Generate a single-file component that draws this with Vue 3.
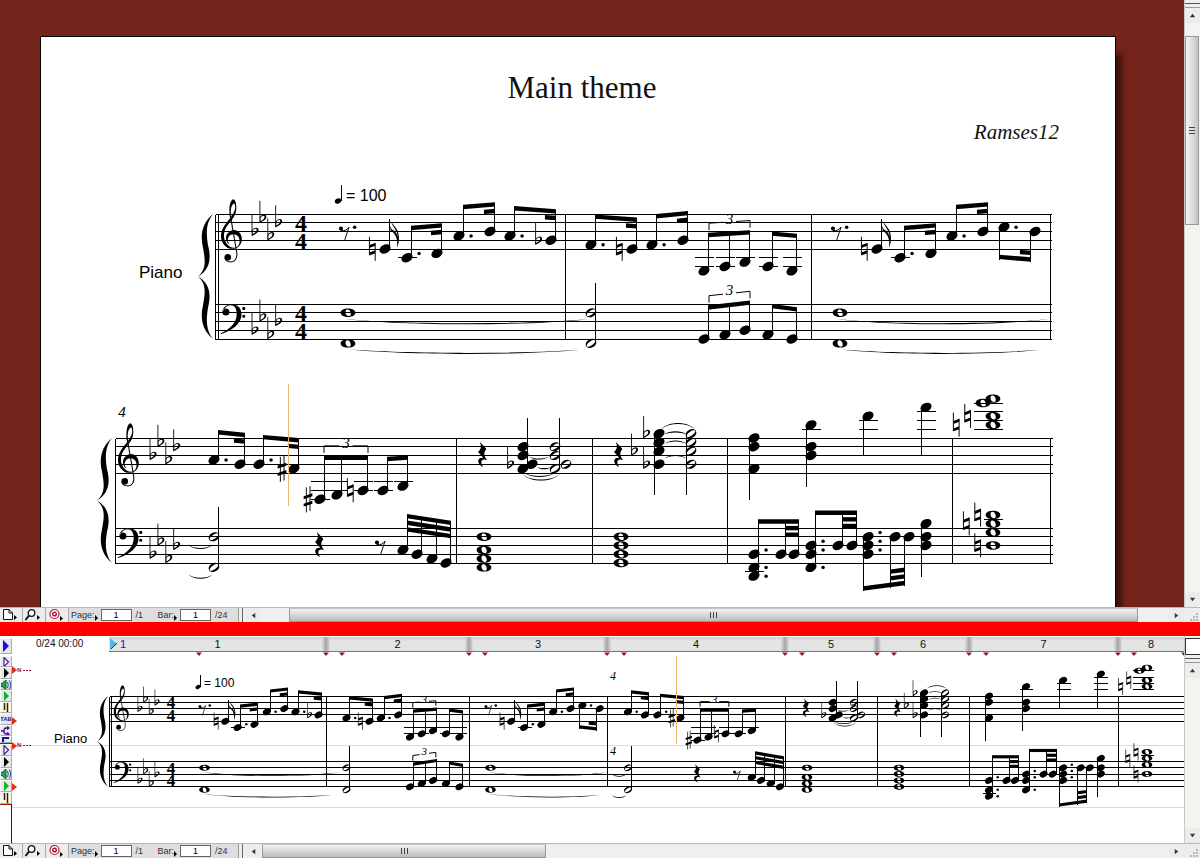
<template>
  <div class="score-app">
    <section v-for="pane in panes" :key="pane.id" :class="['pane', 'pane-' + pane.id]">
      <div class="pane-body">
        <!-- page view -->
        <div v-if="pane.id === 'page'" class="desk">
          <article class="sheet">
            <header class="sheet-head">
              <h1>Main theme</h1>
              <p class="composer">Ramses12</p>
            </header>
            <svg class="sheet-music" viewBox="41 144 1074 464">
              <path v-for="(m, i) in pageMarks.lines" :key="'l' + i" class="ink-line" :class="{ crisp: m.crisp }" :d="m.d" :transform="m.t" :stroke-width="m.w" />
              <path v-for="(m, i) in pageMarks.fills" :key="'f' + i" fill-rule="evenodd" :d="m.d" :transform="m.t" />
              <text v-for="(m, i) in pageMarks.texts" :key="'t' + i" :class="m.cls" :x="m.x" :y="m.y" :font-size="m.size">{{ m.text }}</text>
              <text class="sans" x="139" y="278" font-size="17">Piano</text>
              <text class="sans" x="346" y="201" font-size="16">= 100</text>
              <text class="number" x="122" y="417" font-size="15">4</text>
              <path class="cursor-line" d="M288.5 384V506" />
            </svg>
          </article>
        </div>

        <!-- scroll view -->
        <template v-else>
          <div class="track-tools">
            <button class="tool tool-top" aria-label="Play"><svg viewBox="0 0 12 12"><path d="M3 0L9 6L3 12Z" fill="#1010e0" /></svg></button>
            <div v-for="(group, g) in trackTools" :key="g" :class="['tool-group', 'group-' + g]">
              <button v-for="(tool, i) in group" :key="i" :class="['tool', { half: tool === 'cut' }]" :aria-label="tool">
                <svg v-if="tool !== 'tab'" viewBox="0 0 12 12">
                  <path v-if="tool === 'voice'" d="M4 1.500L8.500 6L4 10.500Z" fill="#fff" stroke="#4a1a90" stroke-width="1.200" />
                  <path v-else-if="tool === 'solo'" d="M4 1L9 6L4 11Z" />
                  <path v-else-if="tool === 'start'" d="M4 1L9 6L4 11Z" fill="#10b030" />
                  <g v-else-if="tool === 'sound'">
                    <path d="M0 4.500H2L6 1V11L2 7.500H0Z" fill="#20a060" stroke="#063" />
                    <path d="M7.500 3Q9 6 7.500 9M9.500 1.500Q12 6 9.500 10.500" fill="none" stroke="#1848a0" />
                  </g>
                  <g v-else-if="tool === 'keys'">
                    <path d="M1 1H11V11H1Z" fill="#fffbd8" />
                    <path d="M4.500 1V8M7.500 1V11" stroke="#222" stroke-width="1.500" />
                  </g>
                  <path v-else-if="tool === 'route'" d="M1 6H4M8 3H6Q4 3 4 6T6 9H8M7 1.500L9 3L7 4.500M7 7.500L9 9L7 10.500" fill="none" stroke="#5010a0" stroke-width="1.300" />
                  <path v-else d="M3 9V4H9" fill="none" stroke="#1010a0" stroke-width="2" />
                </svg>
                <span v-else>TAB</span>
              </button>
            </div>
            <div class="tool-rest"></div>
          </div>
          <div class="roll">
            <div class="ruler-row">
              <span class="clock">0/24 00:00</span>
              <div class="ruler">
                <span class="ruler-start"><svg viewBox="0 0 8 12"><path d="M0 0L7 6L0 12Z" fill="#55b8e8" /><path d="M1 11L7 5" stroke="#333" /></svg>1</span>
                <span v-for="(w, i) in barWidths" :key="i" class="bar-cell" :style="{ flexGrow: w }">{{ i + 1 }}</span>
              </div>
            </div>
            <svg class="roll-music" viewBox="12 652 1172 191" preserveAspectRatio="xMinYMin slice">
              <path class="track-line" d="M12 745.500H1184M12 807.500H1184" />
              <path v-for="(m, i) in rollMarks.lines" :key="'l' + i" class="ink-line" :class="{ crisp: m.crisp }" :d="m.d" :transform="m.t" :stroke-width="m.w" />
              <path v-for="(m, i) in rollMarks.fills" :key="'f' + i" fill-rule="evenodd" :d="m.d" :transform="m.t" />
              <text v-for="(m, i) in rollMarks.texts" :key="'t' + i" :class="m.cls" :x="m.x" :y="m.y" :font-size="m.size">{{ m.text }}</text>
              <text class="sans" x="54" y="743" font-size="13">Piano</text>
              <text class="sans" x="204" y="687" font-size="12">= 100</text>
              <text class="number" x="613" y="680" font-size="12">4</text>
              <text class="number" x="613" y="755" font-size="12">4</text>
              <path v-for="x in flags" :key="'m' + x" class="flag" :d="`M${x - 3} 652.500H${x + 3}L${x} 656Z`" />
              <g v-for="y in [670, 745]" :key="'n' + y">
                <text class="track-name" x="17" :y="y + 2" font-size="6">N</text>
                <path class="track-dash" :d="`M23 ${y}.500H31`" />
              </g>
              <path v-for="y in [670, 721, 746, 787]" :key="'r' + y" class="track-flag" :d="`M12 ${y - 4}L17 ${y}L12 ${y + 4}Z`" />
              <path class="cursor-line" d="M676.500 656V744" />
            </svg>
          </div>
        </template>

        <!-- vertical scroll bar -->
        <div class="vbar">
          <div v-if="pane.id === 'roll'" class="vbar-box"></div>
          <div class="vbar-split"></div>
          <button class="arrow" aria-label="Up"><svg viewBox="0 0 8 8"><path d="M1 6L4 2L7 6Z" /></svg></button>
          <div class="vtrack">
            <div v-if="pane.id === 'page'" class="vthumb"><i></i><i></i><i></i></div>
          </div>
          <button class="arrow" aria-label="Down"><svg viewBox="0 0 8 8"><path d="M1 2L4 6L7 2Z" /></svg></button>
        </div>
      </div>

      <!-- status bar -->
      <footer class="status">
        <button class="status-btn" aria-label="View">
          <svg viewBox="0 0 22 14"><path d="M3.500 1.500H9L12.500 5V11.500H3.500ZM9 1.500V5H12.500" fill="#fff" stroke="#111" /><path d="M14 7L17 9.500L14 12Z" /></svg>
        </button>
        <button class="status-btn" aria-label="Zoom">
          <svg viewBox="0 0 22 14"><circle cx="8.500" cy="5" r="3.300" fill="#fff" stroke="#111" stroke-width="1.300" /><path d="M6 7.500L2.500 12" stroke="#111" stroke-width="2" /><path d="M14 7L17 9.500L14 12Z" /></svg>
        </button>
        <button class="status-btn" aria-label="Target">
          <svg viewBox="0 0 22 14"><circle cx="8.500" cy="6" r="4.500" fill="#fff" stroke="#b01838" stroke-width="1.200" /><circle cx="8.500" cy="6" r="1.800" fill="none" stroke="#b01838" stroke-width="1.500" /><path d="M14 8L17 10.500L14 13Z" /></svg>
        </button>
        <div class="status-fields">
          <label :for="pane.id + '-page'">Page:</label>
          <svg class="tick" viewBox="0 0 3 6"><path d="M0 0L3 3L0 6Z" /></svg>
          <input :id="pane.id + '-page'" value="1" />
          <span class="total">/1</span>
          <label :for="pane.id + '-bar'">Bar:</label>
          <svg class="tick" viewBox="0 0 3 6"><path d="M0 0L3 3L0 6Z" /></svg>
          <input :id="pane.id + '-bar'" value="1" />
          <span class="total">/24</span>
        </div>
        <div class="hsplit"></div>
        <button class="arrow" aria-label="Left"><svg viewBox="0 0 8 8"><path d="M6 1L2 4L6 7Z" /></svg></button>
        <div class="htrack">
          <div class="hthumb" :style="{ marginLeft: pane.left + '%', width: pane.width + '%' }"><i></i><i></i><i></i></div>
        </div>
        <button class="arrow" aria-label="Right"><svg viewBox="0 0 8 8"><path d="M2 1L6 4L2 7Z" /></svg></button>
        <svg class="size-grip" viewBox="0 0 16 15"><path d="M12 5h2v2h-2zM9 8h2v2h-2zM12 8h2v2h-2zM6 11h2v2h-2zM9 11h2v2h-2zM12 11h2v2h-2z" fill="#b8b8b8" /></svg>
      </footer>
    </section>
  </div>
</template>

<script setup>
const panes = [
  { id: 'page', left: 3.1, width: 93.5 },
  { id: 'roll', left: 0.1, width: 31.3 }
]

const trackTools = [
  ['voice', 'solo', 'sound', 'start', 'keys', 'tab', 'route', 'cut'],
  ['voice', 'solo', 'sound', 'start', 'keys']
]

const barWidths = [217, 143, 138, 178, 92, 92, 149, 66]
const flags = [199, 326, 342, 469, 485, 607, 624, 785, 802, 877, 894, 969, 986, 1118, 1134, 1184]

// Glyphs are drawn on a grid of 10 units per staff space
const GLYPHS = {
  head: { fill: 'M-5.9 3.2A6.7 4.9 -28 1 1 5.9 -3.2A6.7 4.9 -28 1 1 -5.9 3.2Z' },
  half: { fill: 'M-5.7 3A6.4 4.8 -28 1 1 5.7 -3A6.4 4.8 -28 1 1 -5.7 3ZM-4.5 3.2A5.6 2 -35 1 0 4.5 -3.2A5.6 2 -35 1 0 -4.5 3.2Z' },
  whole: { fill: 'M-8.4 0C-8.4 -6.4 8.4 -6.4 8.4 0C8.4 6.4 -8.4 6.4 -8.4 0ZM-2.8 -1.5C-2.4 -4.6 1.4 -4.4 2.6 -1C3.6 1.6 3.4 3.6 1.4 3.8C-1.4 4 -3.2 1.4 -2.8 -1.5Z' },
  flat: { fill: 'M-3.4 -1.5C-1 -5.2 4.6 -5.4 4 -1.2C3.6 1.4 -.5 3.6 -3.4 5.2ZM-2.8 -.5V3.2C0 1.8 2 -.2 1.9 -2C1.8 -4 -1.5 -3 -2.8 -.5Z', line: 'M-3.4 -20V5', w: 1 },
  natural: { fill: 'M-3.3 -4.5L3.3 -7V-3.6L-3.3 -1.1ZM-3.3 4L3.3 1.5V4.9L-3.3 7.4Z', line: 'M-3.3 -14V7M3.3 -7V13.5', w: 1.1 },
  sharp: { fill: 'M-5 -3.5L5 -6.8V-3.4L-5 -.1ZM-5 5L5 1.7V5.1L-5 8.4Z', line: 'M-1.9 -13.5V15M2.3 -15V13.5', w: 1.1 },
  quarter: { fill: 'M-2.8 -16L5 -7.5C1.5 -3 2 0 6 5.5C.5 3 -3.5 6.5 1.5 13.5C-6 10 -6.5 2 1.5 2.6L-4.5 -4C-.5 -8 -.5 -11 -2.8 -16Z' },
  eighth: { fill: 'M-7 -3.3A2.4 2.4 0 1 1 -2.2 -3.3A2.4 2.4 0 1 1 -7 -3.3Z', line: 'M-4.5 -1.2Q1.5 0 4.6 -5L-.6 10.7', w: 1.1 },
  flag: { fill: 'M0 0C1 6 10 10 10.5 20C11 26 10 30 8.5 33.5C9.5 25 8 18 0 13ZM0 13C1 8 0 4 0 0C3 10 9 13 9.3 21C7 14 3 12 0 13Z', line: 'M0 9C3 16 9 17 9.8 25', w: 1.1 },
  treble: {
    fill: 'M2.5 -47C5 -47 6.5 -41 6 -35C5.3 -26 -3 -20 -6 -14C-10 -6 -8 3 -1 7.5C2 9.2 5 9 7 7.5C10.5 5 10.6 -1.5 8 -4.5C5 -8 -1 -7.5 -3.2 -3C-4.6 0 -3.4 3.6 -.6 5.2C-4.5 4.2 -6.3 0 -5.6 -4C-4.5 -10 2 -13.5 7 -11C13.5 -8 14 2.5 9 7C3 12.5 -8 10 -11 -1C-13 -10 -8 -17 -2 -24C2 -29 5 -34 4.8 -38C4.6 -42 3 -43 2 -41C-1 -37 -.5 -32 .5 -26L-1 -25.5C-2.5 -32 -2.5 -45 2.5 -47ZM-7.5 19.5A3.8 3.8 0 1 1 .1 19.5A3.8 3.8 0 1 1 -7.5 19.5Z',
    line: 'M-.5 -27L6.6 14C7.6 21 4 24.8 0 24.8C-4 24.8 -6.5 23 -7 20',
    w: 1.2
  },
  bass: {
    fill: 'M-9.8 -1A4 4 0 1 1 -1.8 -1A4 4 0 1 1 -9.8 -1ZM12.8 -5A1.8 1.8 0 1 1 16.4 -5A1.8 1.8 0 1 1 12.8 -5ZM12.8 4A1.8 1.8 0 1 1 16.4 4A1.8 1.8 0 1 1 12.8 4ZM-9.8 -2C-9 -7 -4 -9.8 1 -9.8C8 -9.8 12 -5 12 2C12 12 2 20 -11.5 24.5L-11.8 23.6C0 18 6.5 11 6.5 1.5C6.5 -4.5 4.5 -8.6 0 -8.6C-4 -8.6 -7 -6.5 -8 -3.5Z'
  },
  dot: { fill: 'M-2 0A2 2 0 1 1 2 0A2 2 0 1 1 -2 0Z' }
}

// Steps count half staff spaces down from the top line
const n = (x, steps, more = {}) => ({ kind: 'note', x, steps: [].concat(steps), ...more })
const rest = (x, glyph, more = {}) => ({ kind: 'rest', x, glyph, ...more })
const beam = (y1, y2, sub, notes, down) => ({ kind: 'beam', y1, y2, sub, notes, down })
const tie = (x1, x2, y, h) => ({ kind: 'tie', x1, x2, y, h })
const tuplet = (x1, y1, x2, y2) => ({ kind: 'tuplet', x1, y1, x2, y2 })
const nat = (step, dx = -1.45) => ({ glyph: 'natural', step, dx })
const flat = (step, dx = -1.42) => ({ glyph: 'flat', step, dx })
const sharp = (step, dx = -1.37) => ({ glyph: 'sharp', step, dx })

const bars = [
  {
    treble: [
      rest(345, 'eighth', { dots: [3] }),
      n(385, 8, { acc: [nat(8)], stem: 1, flag: true }),
      beam(2.7, 2.1, 'stub', [n(407, 10, { dots: [9] }), n(437, 9)]),
      beam(-2.1, -2.7, 'stub', [n(459, 5, { dots: [5] }), n(490, 4)]),
      beam(-1.8, -1.1, 'stub', [n(510, 5, { dots: [5] }), n(551, 6, { acc: [flat(6)] })])
    ],
    bass: [n(348, [2, 9], { head: 'whole' }), tie(345, 590, 3.4, 1.1), tie(345, 590, 10.3, 1)]
  },
  {
    treble: [
      beam(0.1, 0.8, 'stub', [n(591, 7, { dots: [7] }), n(632, 8, { acc: [nat(8)] })]),
      beam(0, -0.7, 'stub', [n(652, 7, { dots: [7] }), n(683, 6)]),
      beam(4.3, 3.7, '', [n(704, 13), n(725, 12), n(745, 11)]),
      tuplet(709, 2.1, 750, 1.5),
      beam(4, 4.5, '', [n(768, 12), n(792, 13)])
    ],
    bass: [
      n(591, [2, 9], { head: 'half', stem: -5 }),
      beam(0.3, -0.8, '', [n(704, 8), n(725, 7), n(745, 6)]),
      tuplet(709, -1.9, 750, -2.9),
      beam(0, 0.7, '', [n(768, 7), n(792, 8)])
    ]
  },
  {
    treble: [
      rest(837, 'eighth', { dots: [3] }),
      n(877, 8, { acc: [nat(8)], stem: 1, flag: true }),
      beam(2.7, 2.1, 'stub', [n(900, 10, { dots: [9] }), n(931, 9)]),
      beam(-2.1, -2.7, 'stub', [n(952, 5, { dots: [5] }), n(983, 4)]),
      beam(10.3, 10.9, 'stub', [n(1004, 3, { dots: [3] }), n(1035, 4)], true)
    ],
    bass: [n(840, [2, 9], { head: 'whole' }), tie(837, 1049, 3.4, 1.1), tie(837, 1049, 10.3, 1)]
  },
  {
    treble: [
      beam(-1.8, -1.2, 'stub', [n(214, 5, { dots: [5] }), n(240, 6)]),
      beam(-0.7, 0, 'stub', [n(259, 6, { dots: [5] }), n(294, 7, { acc: [sharp(7)] })]),
      beam(4, 4, '', [n(320, 14, { acc: [sharp(14)] }), n(337, 13), n(363, 12, { acc: [nat(12)] })]),
      tuplet(324, 1.8, 368, 1.8),
      beam(4.3, 4, '', [n(383, 12), n(403, 11)])
    ],
    bass: [
      tie(188, 213, 3.7, 1),
      tie(188, 213, 10.5, 1),
      n(214, [2, 9], { head: 'half', stem: -5 }),
      rest(319, 'quarter'),
      rest(381, 'eighth'),
      beam(-3.2, -1.7, 'full', [n(403, 5), n(417, 6), n(432, 7), n(446, 8)])
    ]
  },
  {
    treble: [
      rest(482, 'quarter'),
      n(523, [2, 4, 7], { acc: [flat(6)], stem: -4.8 }),
      n(532, 6),
      n(555, [2, 4, 7], { head: 'half', stem: -4.8 }),
      n(566, 6, { head: 'half' }),
      tie(529, 549, 4.2, 0.6),
      tie(537, 551, 6.6, 0.4),
      tie(524, 555, 8, 0.8),
      tie(522, 560, 8.2, 1.4)
    ],
    bass: [n(484, [2, 5, 7, 9], { head: 'whole' })]
  },
  {
    treble: [
      rest(618, 'quarter'),
      n(659, [-1, 1, 3, 6], { acc: [flat(-1), flat(3, -2.8), flat(6)], stem: 13, down: true }),
      n(691, [-1, 1, 3, 6], { head: 'half', stem: 13, down: true }),
      tie(661, 695, -2, -1.3),
      tie(664, 687, -0.8, -0.6),
      tie(664, 687, 1.4, -0.7),
      tie(664, 687, 4.8, -0.8)
    ],
    bass: [n(621, [2, 4, 6, 8], { head: 'whole' })]
  },
  {
    treble: [
      n(754, [0, 2, 7], { stem: 14, down: true }),
      n(811, [-3, 2, 4], { stem: 11, down: true }),
      n(868, -5, { stem: 4, down: true }),
      n(926, -7, { stem: 4, down: true })
    ],
    bass: [
      beam(-2, -2, 'tail', [n(754, [6, 9, 11], { dots: [5, 9, 11] }), n(781, 6), n(794, 6)]),
      beam(-4, -4, 'tail', [n(811, [4, 6, 9], { dots: [3, 5, 9] }), n(838, 4), n(852, 4)]),
      beam(14.3, 13.1, 'tail', [n(868, [2, 4, 6], { dots: [1, 3, 5] }), n(895, 2), n(909, 2)], true),
      n(926, [-1, 2, 4], { stem: 11, down: true })
    ]
  },
  {
    treble: [
      n(993, [-9, -5, -3], { head: 'whole', acc: [nat(-5, -2.9), nat(-3, -4.2)] }),
      n(983, -8, { head: 'whole' })
    ],
    bass: [n(993, [-3, -1, 1, 4], { head: 'whole', acc: [nat(-3, -1.75), nat(-1, -3.05), nat(4, -1.75)] })]
  }
]

function createMarks() {
  return { lines: [], fills: [], texts: [] }
}

function engrave(marks, sys) {
  const s = sys.space
  const top = { treble: sys.treble, bass: sys.bass }
  const yOf = (staff, step) => top[staff] + step * s / 2
  const line = (x1, y1, x2, y2) => {
    marks.lines.push({ d: `M${x1} ${y1}L${x2} ${y2}`, w: 1 })
  }
  const crisp = (x1, y1, x2, y2) => {
    const r = v => Math.floor(v) + 0.5
    marks.lines.push({ d: `M${r(x1)} ${r(y1)}L${r(x2)} ${r(y2)}`, w: 1, crisp: true })
  }
  const glyph = (name, x, y, size = s) => {
    const g = GLYPHS[name]
    const t = `translate(${x} ${y}) scale(${size / 10})`
    if (g.fill) marks.fills.push({ d: g.fill, t })
    if (g.line) marks.lines.push({ d: g.line, t, w: g.w })
  }

  // staves, bar lines and brace
  for (const staff of ['treble', 'bass']) {
    for (let i = 0; i < 5; i++) crisp(sys.left, yOf(staff, i * 2), sys.right, yOf(staff, i * 2))
    glyph(staff, sys.clef, yOf(staff, staff === 'treble' ? 6 : 2))
    const keySteps = staff === 'treble' ? [4, 1, 5, 2] : [6, 3, 7, 4]
    keySteps.forEach((step, i) => glyph('flat', sys.key + i * 0.9 * s, yOf(staff, step)))
    if (sys.time) {
      for (const step of [3.9, 7.9]) {
        marks.texts.push({ text: '4', cls: 'meter', x: sys.time, y: yOf(staff, step), size: Math.round(s * 2.75) })
      }
    }
  }
  const bottom = yOf('bass', 8)
  for (const x of sys.barLines) crisp(x, sys.treble, x, bottom)
  const h = bottom - sys.treble
  const bx = k => sys.brace - k * s / 8.75
  const by = k => sys.treble + h * k
  const side = (a, b) => `M${bx(0)} ${by(a)}C${bx(11)} ${by(a + b * 0.07)} ${bx(13)} ${by(a + b * 0.17)} ${bx(10)} ${by(a + b * 0.27)}C${bx(8)} ${by(a + b * 0.36)} ${bx(6)} ${by(a + b * 0.44)} ${bx(15)} ${by(a + b * 0.5)}C${bx(2)} ${by(a + b * 0.44)} ${bx(2)} ${by(a + b * 0.34)} ${bx(5)} ${by(a + b * 0.25)}C${bx(7)} ${by(a + b * 0.15)} ${bx(7)} ${by(a + b * 0.07)} ${bx(0)} ${by(a)}Z`
  marks.fills.push({ d: side(0, 1) }, { d: side(1, -1) })

  function drawNote(staff, px, note) {
    const x = px(note.x)
    for (const step of note.steps) {
      glyph(note.head || 'head', x, yOf(staff, step))
    }
    const w = 1.1 * s
    for (let l = 10; l <= Math.max(...note.steps); l += 2) crisp(x - w, yOf(staff, l), x + w, yOf(staff, l))
    for (let l = -2; l >= Math.min(...note.steps); l -= 2) crisp(x - w, yOf(staff, l), x + w, yOf(staff, l))
    for (const a of note.acc || []) glyph(a.glyph, x + a.dx * s, yOf(staff, a.step))
    for (const d of note.dots || []) glyph('dot', x + 1.38 * s, yOf(staff, d))
    if (note.stem !== undefined) {
      const sx = x + (note.down ? -0.53 : 0.53) * s
      const from = note.down ? Math.min(...note.steps) : Math.max(...note.steps)
      crisp(sx, yOf(staff, from), sx, yOf(staff, note.stem))
      if (note.flag) glyph('flag', sx, yOf(staff, note.stem))
    }
  }

  function drawBeam(staff, px, group) {
    const dir = group.down ? -1 : 1
    const off = 0.53 * s * dir
    const xs = group.notes.map(note => Math.floor(px(note.x) + off) + 0.5)
    const xa = xs[0]
    const xb = xs[xs.length - 1]
    const ya = yOf(staff, group.y1)
    const yb = yOf(staff, group.y2)
    const edge = x => ya + (yb - ya) * (x - xa) / (xb - xa)
    const bar = (x1, x2, level) => {
      const d = level * 0.76 * s * dir
      const t = 0.5 * s * dir
      const l = x1 - 0.5
      const r = x2 + 0.5
      marks.fills.push({ d: `M${l} ${edge(l) + d}L${r} ${edge(r) + d}V${edge(r) + d + t}L${l} ${edge(l) + d + t}Z` })
    }
    bar(xa, xb, 0)
    if (group.sub === 'stub') bar(xb - 1.15 * s, xb, 1)
    if (group.sub === 'tail') [1, 2].forEach(l => bar(xs[1], xb, l))
    if (group.sub === 'full') [1, 2].forEach(l => bar(xa, xb, l))
    group.notes.forEach((note, i) => {
      drawNote(staff, px, note)
      const from = group.down ? Math.min(...note.steps) : Math.max(...note.steps)
      crisp(xs[i], yOf(staff, from), xs[i], edge(xs[i]))
    })
  }

  for (const place of sys.places) {
    const px = x => place.at + (x - place.from) * place.k
    for (const staff of ['treble', 'bass']) {
      for (const item of bars[place.bar][staff]) {
        if (item.kind === 'note') drawNote(staff, px, item)
        if (item.kind === 'beam') drawBeam(staff, px, item)
        if (item.kind === 'rest') {
          glyph(item.glyph, px(item.x), yOf(staff, 4))
          for (const d of item.dots || []) glyph('dot', px(item.x) + 1.1 * s, yOf(staff, d))
        }
        if (item.kind === 'tie') {
          const [x1, x2, y] = [px(item.x1), px(item.x2), yOf(staff, item.y)]
          const c = item.h * s * 0.667
          const t = Math.sign(item.h) * 0.08 * s
          const q = (x2 - x1) * 0.25
          marks.fills.push({ d: `M${x1} ${y}C${x1 + q} ${y + c + t} ${x2 - q} ${y + c + t} ${x2} ${y}C${x2 - q} ${y + c - t} ${x1 + q} ${y + c - t} ${x1} ${y}Z` })
        }
        if (item.kind === 'tuplet') {
          const [x1, x2, y1, y2] = [px(item.x1), px(item.x2), yOf(staff, item.y1), yOf(staff, item.y2)]
          const mx = (x1 + x2) / 2
          const my = (y1 + y2) / 2
          const gap = 0.75 * s
          const lean = (y2 - y1) / (x2 - x1) * gap
          line(x1, y1 + 0.8 * s, x1, y1)
          line(x1, y1, mx - gap, my - lean)
          line(mx + gap, my + lean, x2, y2)
          line(x2, y2, x2, y2 + 0.8 * s)
          marks.texts.push({ text: '3', cls: 'number', x: mx, y: my + 0.2 * s, size: Math.round(s * 1.7) })
        }
      }
    }
  }
  return glyph
}

const same = bar => ({ bar, at: 0, from: 0, k: 1 })

const pageMarks = createMarks()
const pageGlyph = engrave(pageMarks, {
  space: 8.75, treble: 214, bass: 304, left: 215, right: 1051, brace: 213,
  clef: 231, key: 255, time: 301,
  barLines: [215, 218, 565, 811, 1050],
  places: [0, 1, 2].map(same)
})
engrave(pageMarks, {
  space: 8.75, treble: 438, bass: 528, left: 115, right: 1052, brace: 112,
  clef: 128, key: 153, time: 0,
  barLines: [115, 456, 592, 727, 952, 1050],
  places: [3, 4, 5, 6, 7].map(same)
})
pageGlyph('head', 338, 201, 5)
pageMarks.lines.push({ d: 'M341.5 201V185', w: 1 })

const rollMarks = createMarks()
const rollGlyph = engrave(rollMarks, {
  space: 6.3, treble: 696, bass: 761.5, left: 109, right: 1186, brace: 108,
  clef: 121, key: 140, time: 171,
  barLines: [109, 111, 326, 469, 607, 785, 877, 969, 1118],
  places: [
    { bar: 0, from: 348, at: 204.5, k: 0.562 },
    { bar: 1, from: 591, at: 346.5, k: 0.562 },
    { bar: 2, from: 840, at: 490.5, k: 0.56 },
    { bar: 3, from: 214, at: 628, k: 0.655 },
    { bar: 4, from: 484, at: 807, k: 0.66 },
    { bar: 5, from: 621, at: 899, k: 0.66 },
    { bar: 6, from: 754, at: 989, k: 0.65 },
    { bar: 7, from: 993, at: 1147, k: 0.77 }
  ]
})
rollGlyph('head', 198, 687, 4)
rollMarks.lines.push({ d: 'M200.5 687V675', w: 1 })
</script>

<style>
body {
  margin: 0;
}
</style>

<style scoped>
.score-app {
  display: flex;
  flex-direction: column;
  height: 100vh;
  overflow: hidden;
  background: #fff;
  font-family: "Liberation Sans", Arial, sans-serif;
  color: #111;
}

.score-app * {
  box-sizing: border-box;
}

button {
  padding: 0;
  border: 0;
  background: #ececec;
  font: inherit;
}

svg {
  display: block;
}

.pane {
  display: flex;
  flex-direction: column;
}

.pane-page {
  flex: 1;
  min-height: 0;
}

.pane-roll {
  border-top: 14px solid #f00;
}

.pane-body {
  display: flex;
  flex: 1;
  min-height: 0;
}

/* page view */
.desk {
  flex: 1;
  min-width: 0;
  overflow: hidden;
  background: #74241b;
  padding: 36px 68px 0 40px;
}

.sheet {
  background: #fff;
  border: 1px solid #000;
  border-bottom: 0;
  box-shadow: 6px 18px 6px #3a120c;
}

.sheet-head {
  padding: 33px 56px 0 64px;
  font-family: "Liberation Serif", "Times New Roman", serif;
}

.sheet-head h1 {
  margin: 0 0 14px;
  font-size: 31px;
  line-height: 36px;
  font-weight: normal;
  text-align: center;
}

.composer {
  margin: 0;
  font-size: 21px;
  line-height: 24px;
  font-style: italic;
  text-align: right;
}

.sheet-music {
  width: 100%;
}

/* notation */
.ink-line {
  fill: none;
  stroke: #000;
}

.crisp {
  shape-rendering: crispEdges;
}

.sans {
  font-family: "Liberation Sans", Arial, sans-serif;
}

.number {
  font-family: "Liberation Serif", "Times New Roman", serif;
  font-style: italic;
  text-anchor: middle;
}

.meter {
  font-family: "Liberation Serif", "Times New Roman", serif;
  font-weight: bold;
  text-anchor: middle;
}

.cursor-line {
  stroke: #e8b868;
}

/* scroll view */
.roll {
  flex: 1;
  min-width: 0;
}

.ruler-row {
  display: flex;
  height: 16px;
}

.clock {
  width: 97px;
  padding-left: 24px;
  font-size: 10px;
  line-height: 16px;
  white-space: nowrap;
}

.ruler {
  display: flex;
  flex: 1;
  position: relative;
  height: 15px;
  margin-top: 1px;
  background: linear-gradient(#cfcfcf, #e4e4e4 30%, #e4e4e4);
  border-bottom: 1px solid #777;
  overflow: hidden;
}

.ruler-start {
  position: absolute;
  left: 1px;
  top: 1px;
  display: flex;
  gap: 2px;
  color: #2a10c0;
  font-size: 11px;
  line-height: 13px;
}

.ruler-start svg {
  width: 8px;
  height: 12px;
}

.bar-cell {
  position: relative;
  flex: 1 1 0;
  font-size: 11px;
  line-height: 14px;
  text-align: center;
}

.bar-cell + .bar-cell::before {
  content: "";
  position: absolute;
  left: -4px;
  top: 0;
  width: 8px;
  height: 14px;
  background: linear-gradient(90deg, #ddd, #a4a4a4 50%, #ddd);
}

.roll-music {
  width: 100%;
  height: 191px;
}

.track-line {
  stroke: #f5c8f2;
}

.flag {
  fill: #a01010;
}

.track-flag {
  fill: #e03018;
}

.track-name {
  fill: #a01030;
  font-family: "Liberation Sans", Arial, sans-serif;
  font-weight: bold;
}

.track-dash {
  stroke: #a01030;
  stroke-dasharray: 2 1;
}

.track-tools {
  display: flex;
  flex-direction: column;
  width: 12px;
  padding-top: 2px;
}

.tool {
  display: flex;
  align-items: center;
  justify-content: center;
  flex: 2 1 0;
  min-height: 0;
  width: 12px;
  border: 1px solid;
  border-color: #fafafa #aaa #aaa #fafafa;
  background: #e8e8e8;
  color: #1010b0;
  font-size: 6px;
  font-weight: bold;
  overflow: hidden;
}

.tool svg {
  width: 12px;
  height: 12px;
  flex: none;
}

.tool.half {
  flex-grow: 1;
}

.tool-top {
  flex: 0 0 16px;
  margin-bottom: 2px;
}

.tool-group {
  display: flex;
  flex-direction: column;
  border-bottom: 1px solid #a01010;
}

.group-0 {
  height: 88px;
}

.group-1 {
  height: 61px;
}

.tool-rest {
  flex: 1;
  border-right: 1px solid #222;
}

/* scroll bars */
.vbar {
  display: flex;
  flex-direction: column;
  width: 16px;
  background: #f0f0ec;
  border-left: 1px solid #c8c8c4;
}

.vbar-box {
  height: 17px;
  margin-top: 2px;
  border: 1px solid #333;
  border-width: 1px 0 1px 1px;
  background: #fff;
}

.vbar-split {
  height: 8px;
  border: 1px solid #999;
  border-width: 0 0 1px;
  background: linear-gradient(#eee 3px, #555 3px, #555 4px, #eee 4px);
}

.arrow {
  display: flex;
  align-items: center;
  justify-content: center;
  flex: 0 0 15px;
}

.arrow svg {
  width: 7px;
  height: 7px;
  fill: #333;
}

.vtrack {
  flex: 1;
  padding-top: 13px;
  background: #f3f3ef;
}

.vthumb {
  display: flex;
  flex-direction: column;
  align-items: center;
  justify-content: center;
  gap: 2px;
  height: 34%;
  width: 14px;
  border: 1px solid #999;
  background: linear-gradient(90deg, #f4f4f4, #dfdfe2 50%, #bfc1c5);
}

.vthumb i {
  width: 6px;
  height: 1px;
  background: #444;
}

/* status bar */
.status {
  display: flex;
  height: 15px;
  background: #ededed;
  border-top: 1px solid #b8b8b8;
  font-size: 9px;
  line-height: 14px;
  color: #333;
}

.status-btn {
  width: 23px;
  border-right: 1px solid #aaa;
}

.status-btn svg {
  width: 22px;
  height: 14px;
}

.status-fields {
  display: flex;
  align-items: center;
  width: 170px;
  padding-left: 2px;
  border-right: 1px solid #999;
  background: #dedede;
}

.tick {
  width: 3px;
  height: 6px;
  margin-top: 6px;
}

.status-fields input {
  width: 31px;
  height: 12px;
  margin: 0 4px 1px 3px;
  padding: 0;
  border: 1px solid #666;
  background: #fff;
  font: 9px "Liberation Sans", Arial, sans-serif;
  text-align: center;
}

.total {
  width: 22px;
}

.total:last-child {
  width: auto;
}

.hsplit {
  width: 7px;
  background: linear-gradient(90deg, #eee 3px, #666 3px, #666 4px, #eee 4px);
}

.htrack {
  flex: 1;
  background: #efefef;
}

.hthumb {
  display: flex;
  align-items: flex-start;
  justify-content: center;
  gap: 2px;
  height: 14px;
  padding-top: 3px;
  border: 1px solid #999;
  border-top-color: #c4c4c4;
  background: linear-gradient(#f2f2f2, #d8d8da 50%, #b8babc);
}

.hthumb i {
  width: 1px;
  height: 6px;
  background: #444;
}

.size-grip {
  width: 16px;
  height: 15px;
}
</style>
